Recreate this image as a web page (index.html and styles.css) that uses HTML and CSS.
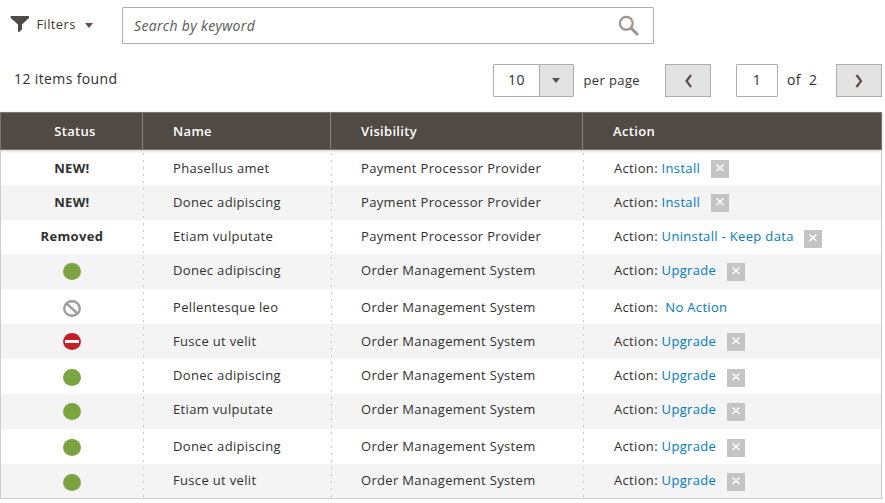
FILE: index.html
```html
<!DOCTYPE html>
<html lang="en">
<head>
<meta charset="utf-8">
<title>Extensions</title>
<link rel="stylesheet" href="styles.css">
</head>
<body>
<div class="toolbar">
  <div class="filters">
    <svg class="funnel" width="20" height="16" viewBox="0 0 20 16"><path d="M.7 0h18.300v2l-7 6.500v5L9 16H8V8.500L.7 2z" fill="#514943"/></svg>
    <span class="filters-label">Filters</span>
    <span class="caret"></span>
  </div>
  <div class="search">
    <span class="placeholder">Search by keyword</span>
    <svg width="22" height="22" viewBox="0 0 22 22" fill="none" stroke="#9e958f"><circle cx="8.300" cy="8.300" r="6.400" stroke-width="2.300"/><path d="M13 13l7 7" stroke-width="3"/></svg>
  </div>
</div>
<div class="pager">
  <span class="count">12 items found</span>
  <div class="select"><span class="select-value">10</span><span class="select-button"><span class="caret"></span></span></div>
  <span class="per-page">per page</span>
  <div class="nav"><svg width="10" height="14" viewBox="0 0 10 14"><path d="M8 1L3.500 7L8 13"/></svg></div>
  <div class="page-number">1</div>
  <span class="total">of&nbsp; 2</span>
  <div class="nav"><svg width="10" height="14" viewBox="0 0 10 14"><path d="M2.500 1L7 7l-4.500 6"/></svg></div>
</div>
<div class="grid">
  <div class="head"><span class="status">Status</span><span>Name</span><span>Visibility</span><span>Action</span></div>
  <div class="body" id="rows"></div>
</div>
<script src="rows.js"></script>
</body>
</html>
```
FILE: styles.css
```css
* { box-sizing: border-box; }
body { margin: 0; width: 885px; height: 503px; overflow: hidden; background: #fff; color: #303030; font-family: "Open Sans", "Noto Sans", sans-serif; font-size: 13px; letter-spacing: 0.33px; }
svg { display: block; flex: none; }
.toolbar { display: flex; height: 44px; padding: 7px 0 0 10px; }
.filters { display: flex; width: 112px; height: 37px; padding-top: 9px; align-items: flex-start; }
.filters-label { margin: -1px 0 0 6.5px; line-height: 18px; color: #41362f; letter-spacing: 0.36px; }
.caret { width: 0; height: 0; border: 4px solid transparent; border-top: 5px solid #5f4f45; border-bottom: 0; }
.filters .caret { margin: 7px 0 0 8.8px; }
.search { display: flex; width: 532px; height: 37px; padding: 0 13px 0 11px; border: 1px solid #adadad; border-radius: 1px; align-items: center; justify-content: space-between; }
.placeholder { font-size: 14px; font-style: italic; color: #585858; letter-spacing: 0.33px; }
.pager { display: flex; height: 68px; padding: 20px 3px 0 14px; font-size: 14px; letter-spacing: 0.38px; }
.pager > * { height: 33px; line-height: 30px; flex: none; }
.count { width: 479px; }
.select { display: flex; width: 81px; border: 1px solid #adadad; border-radius: 1px; }
.select-value { width: 45px; text-align: center; }
.select-button { display: flex; flex: 1; padding-right: 1px; background: #e3e3e3; border-left: 1px solid #adadad; align-items: center; justify-content: center; }
.per-page { width: 91px; padding-left: 9.5px; font-size: 13px; }
.pager > .per-page { line-height: 33px; }
.nav { display: flex; width: 46px; background: #e3e3e3; border: 1px solid #adadad; align-items: center; justify-content: center; }
.nav path { fill: none; stroke: #5f4f45; stroke-width: 2.2; }
.page-number { width: 42px; margin-left: 25px; border: 1px solid #adadad; border-radius: 1px; text-align: center; }
.total { width: 58px; padding-left: 9px; }
.pager > .total { line-height: 32px; }
.grid { width: 882px; height: 387px; }
.head, .row { display: grid; grid-template-columns: 142px 188px 252px 1fr; }
.head { height: 38px; background: #514943; border: 1px solid #7d746d; color: #fff; font-weight: 600; line-height: 36px; box-shadow: 0 1px 3px rgba(0,0,0,.2); }
.head span { padding-left: 30px; border-right: 1px solid #8a827c; }
.head .status { padding: 0 0 0 7px; text-align: center; }
.head span:last-child { border-right: 0; }
.body { height: 349px; border: 1px solid #ccc; border-top: 0; }
.row { height: 35px; line-height: 18px; }
.row:nth-child(3), .row:nth-child(10) { height: 34px; }
.row:nth-child(even) { background: #f4f4f4; }
.row > div { padding: var(--text-top) 0 0 30px; }
.row > div:not(.action) { margin-right: -1px; background: repeating-linear-gradient(#c8c8c8 0 2px, transparent 2px 7px) right 0 top 3px / 1px 100% no-repeat; }
.row > .status { padding: var(--text-top) 1.2px 0 0; font-weight: 700; text-align: center; }
.row > .icon { display: flex; padding: var(--icon-top) 1px 0 0; justify-content: center; }
.row > .action { display: flex; padding: 0 0 0 31px; }
.action-text { padding-top: var(--text-top); white-space: pre; }
.action a { color: #007bbd; }
.remove { width: 18px; height: 18px; margin-top: var(--remove-top); margin-left: 10.6px; background: #c4c4c4; }
.remove path { fill: none; stroke: #fff; stroke-width: 1.6; }
```
FILE: rows.js
```js
const PAYMENT = "Payment Processor Provider";
const ORDER = "Order Management System";
const icons = {
  ok: '<svg width="18" height="17" viewBox="0 0 18 17"><ellipse cx="9" cy="8.500" rx="9" ry="8.500" fill="#7aa43f"/></svg>',
  none: '<svg width="18" height="17" viewBox="0 0 18 17" fill="none" stroke="#9e9e9e" stroke-width="2.400"><ellipse cx="9" cy="8.500" rx="7.800" ry="7.300"/><path d="M3.500 3.500l11 10"/></svg>',
  off: '<svg width="18" height="17" viewBox="0 0 18 17"><ellipse cx="9" cy="8.500" rx="9" ry="8.500" fill="#c41f26"/><path d="M2 7h14v3H2z" fill="#fff"/></svg>'
};
const rows = [
  ["NEW!", "Phasellus amet", PAYMENT, "Install", 9, 0, 10],
  ["NEW!", "Donec adipiscing", PAYMENT, "Install", 8, 0, 9],
  ["Removed", "Etiam vulputate", PAYMENT, "Uninstall - Keep data", 7, 0, 10],
  ["ok", "Donec adipiscing", ORDER, "Upgrade", 7, 9, 9],
  ["none", "Pellentesque leo", ORDER, "No Action", 9, 11, 0],
  ["off", "Fusce ut velit", ORDER, "Upgrade", 8, 9, 9],
  ["ok", "Donec adipiscing", ORDER, "Upgrade", 7, 10, 10],
  ["ok", "Etiam vulputate", ORDER, "Upgrade", 6, 9, 9],
  ["ok", "Donec adipiscing", ORDER, "Upgrade", 8, 10, 10],
  ["ok", "Fusce ut velit", ORDER, "Upgrade", 7, 10, 9]
];
const remove = '<svg class="remove" viewBox="0 0 18 18"><path d="M5.500 4.500l7 6.500M12.500 4.500l-7 6.500"/></svg>';
document.getElementById("rows").innerHTML = rows.map(([status, name, visibility, action, text, icon, button]) => `
  <div class="row" style="--text-top:${text}px;--icon-top:${icon}px;--remove-top:${button}px">
    <div class="status${icons[status] ? " icon" : ""}">${icons[status] || status}</div>
    <div>${name}</div>
    <div>${visibility}</div>
    <div class="action"><span class="action-text">Action: ${button ? "" : " "}<a>${action}</a></span>${button ? remove : ""}</div>
  </div>`).join("");
```
